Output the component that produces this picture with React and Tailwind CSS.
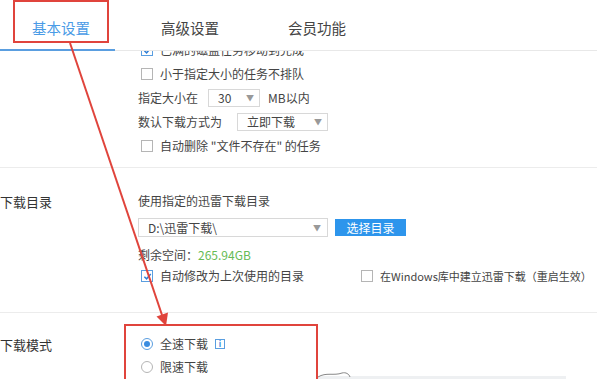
import React from "react";

const Box = ({ checked }) => (
  <span
    className={`flex h-[12px] w-[12px] shrink-0 items-center justify-center border bg-white ${
      checked ? "border-[#5a9ee0]" : "border-[#b5b5b5]"
    }`}
  >
    {checked && (
      <svg width="9" height="9" viewBox="0 0 10 10">
        <path d="M1.5 5.2 L4 7.6 L8.6 2.2" fill="none" stroke="#2f7fd6" strokeWidth="1.6" />
      </svg>
    )}
  </span>
);

const Radio = ({ checked }) => (
  <span
    className={`flex h-[12px] w-[12px] shrink-0 items-center justify-center rounded-full border bg-white ${
      checked ? "border-[#5a9ee0]" : "border-[#b5b5b5]"
    }`}
  >
    {checked && <span className="h-[6px] w-[6px] rounded-full bg-[#3b8de0]" />}
  </span>
);

const Caret = () => <span className="text-[8px] text-[#999]">▼</span>;

const Check = ({ checked, children, className = "" }) => (
  <div className={`flex h-[24px] items-center gap-[7px] whitespace-nowrap pl-[3px] ${className}`}>
    <Box checked={checked} />
    <span>{children}</span>
  </div>
);

export default function App() {
  return (
    <div className="relative h-[379px] w-[597px] overflow-hidden bg-white font-['Noto_Sans_CJK_SC',sans-serif] text-[12px] text-[#444]">
      {/* tabs */}
      <div className="relative z-10 flex h-[51px] border-b border-[#e8e8e8] bg-white text-[14.5px]">
        <div className="relative flex w-[122px] items-center justify-center pt-[6px] text-[#4a9be6]">
          基本设置
          <div className="absolute bottom-[-1px] left-0 h-[2px] w-[115px] bg-[#5a9ee0]" />
        </div>
        <div className="flex w-[136px] items-center justify-center pt-[6px] text-[#444]">高级设置</div>
        <div className="flex w-[118px] items-center justify-center pt-[6px] text-[#444]">会员功能</div>
      </div>

      {/* section 1 */}
      <div className="-mt-[13px] flex border-b border-[#ececec] pb-[9px]">
        <div className="w-[138px] shrink-0" />
        <div className="flex flex-col">
          <Check checked>已满的磁盘任务移动到完成</Check>
          <Check>小于指定大小的任务不排队</Check>
          <div className="flex h-[24px] items-center">
            <span className="w-[70px]">指定大小在</span>
            <div className="flex h-[18px] w-[52px] items-center justify-between border border-[#d8d8d8] pl-[9px] pr-[5px]">
              <span>30</span>
              <Caret />
            </div>
            <span className="ml-[8px]">MB以内</span>
          </div>
          <div className="flex h-[24px] items-center">
            <span className="w-[99px]">数认下载方式为</span>
            <div className="flex h-[18px] w-[91px] items-center justify-between border border-[#d8d8d8] pl-[9px] pr-[5px]">
              <span>立即下载</span>
              <Caret />
            </div>
          </div>
          <Check>自动删除 "文件不存在" 的任务</Check>
        </div>
      </div>

      {/* section 2 */}
      <div className="flex h-[145px] border-b border-[#ececec]">
        <div className="w-[138px] shrink-0 pt-[24px] text-[13px] text-[#333]">下载目录</div>
        <div className="flex flex-1 flex-col pt-[24px]">
          <div className="h-[18px] leading-[18px]">使用指定的迅雷下载目录</div>
          <div className="mt-[8px] flex items-center">
            <div className="flex h-[19px] w-[190px] items-center justify-between border border-[#d8d8d8] pl-[9px] pr-[6px]">
              <span>D:\迅雷下载\</span>
              <Caret />
            </div>
            <div className="ml-[7px] flex h-[17px] w-[71px] items-center justify-center bg-[#2d95ec] text-[12px] text-white">
              选择目录
            </div>
          </div>
          <div className="mt-[9px] h-[18px] leading-[18px]">
            剩余空间：<span className="text-[#66bb55]">265.94GB</span>
          </div>
          <div className="flex">
            <Check checked className="w-[220px]">自动修改为上次使用的目录</Check>
            <Check className="text-[11px]">在Windows库中建立迅雷下载（重启生效）</Check>
          </div>
        </div>
      </div>

      {/* section 3 */}
      <div className="flex">
        <div className="w-[138px] shrink-0 pt-[22px] text-[13px] text-[#333]">下载模式</div>
        <div className="flex flex-col gap-[5px] pt-[22px]">
          <div className="flex h-[18px] items-center gap-[7px] pl-[3px]">
            <Radio checked />
            <span>全速下载</span>
            <span className="flex h-[10px] w-[10px] items-center justify-center border border-[#5a9ee0] text-[8px] font-bold leading-none text-[#3b8de0]">
              i
            </span>
          </div>
          <div className="flex h-[18px] items-center gap-[7px] pl-[3px]">
            <Radio />
            <span>限速下载</span>
          </div>
        </div>
      </div>

      {/* bottom edge of a popup */}
      <div className="absolute bottom-0 left-[318px] h-[3px] w-[248px] bg-[#eef0f2]" />

      {/* annotations */}
      <div className="absolute left-[13px] top-0 z-20 h-[43px] w-[96px] border-2 border-[#e0443c]" />
      <div className="absolute left-[124px] top-[324px] z-20 h-[70px] w-[194px] border-2 border-[#e0443c]" />
      <svg className="absolute left-0 top-0 z-20" width="597" height="379">
        <line x1="70" y1="43" x2="162" y2="315" stroke="#e0443c" strokeWidth="2" />
        <polygon points="166,326 168,312.5 156.5,316.5" fill="#e0443c" />
        <path d="M318 377 C326 372 334 376 342 373 C346 372 349 374 350 377" fill="none" stroke="#888" strokeWidth="1" />
      </svg>
    </div>
  );
}
